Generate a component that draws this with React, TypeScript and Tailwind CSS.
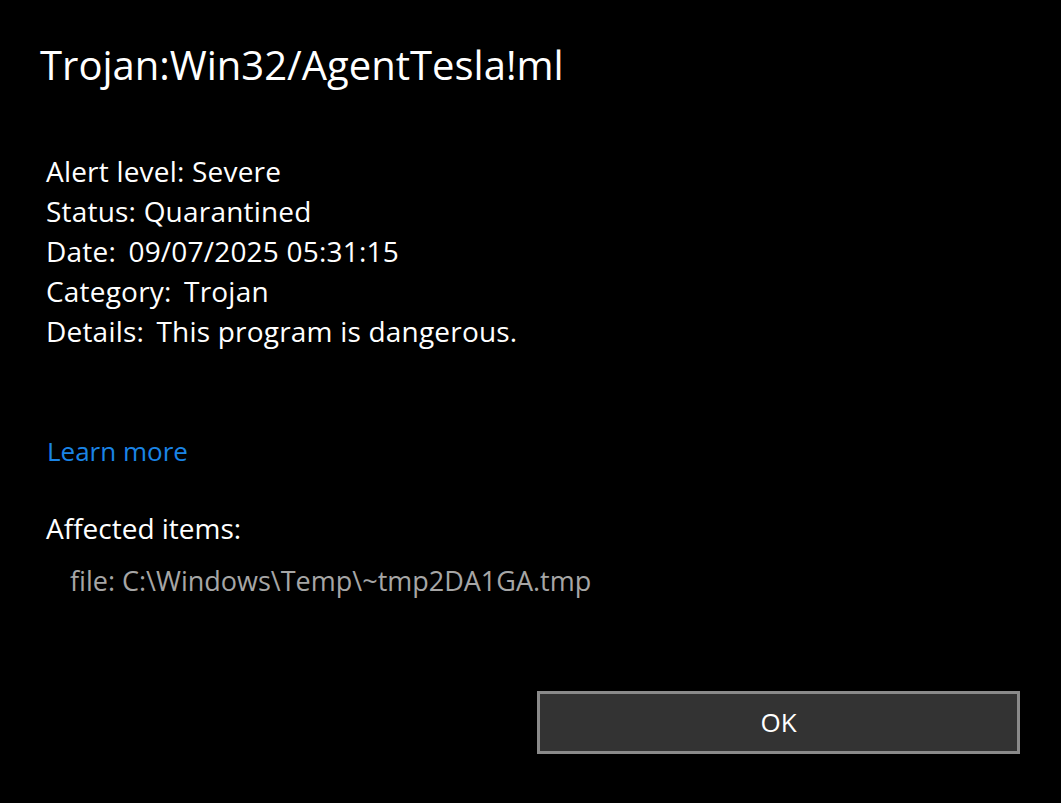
export default function App() {
  const rows: [string, string, boolean][] = [
    ['Alert level:', 'Severe', false],
    ['Status:', 'Quarantined', false],
    ['Date:', '09/07/2025 05:31:15', true],
    ['Category:', 'Trojan', true],
    ['Details:', 'This program is dangerous.', true],
  ];

  return (
    <div
      className="w-[1061px] h-[803px] bg-black text-white flex flex-col"
      style={{ fontFamily: '"Open Sans", "Noto Sans", sans-serif' }}
    >
      <h1 className="pl-[40px] pt-[38px] text-[40px] leading-[54px] font-normal">
        Trojan:Win32/AgentTesla!ml
      </h1>

      <div className="pl-[46px] pt-[59px] text-[28px] leading-[40px] tracking-[0.2px]">
        {rows.map(([label, value, wide]) => (
          <div key={label}>
            {label}{' '}
            <span className={wide ? 'ml-[5px]' : ''}>{value}</span>
          </div>
        ))}
      </div>

      <a className="ml-[47px] mt-[80px] text-[26px] leading-[40px] text-[#1a84e6] w-fit">
        Learn more
      </a>

      <div className="pl-[46px] mt-[37px] text-[28px] leading-[40px]">Affected items:</div>
      <div className="pl-[70px] mt-[13px] text-[27px] leading-[40px] text-[#a6a6a6]">
        file: C:\Windows\Temp\~tmp2DA1GA.tmp
      </div>

      <div className="flex justify-end pr-[41px] mt-[90px]">
        <button className="w-[483px] h-[63px] bg-[#333333] border-[3px] border-[#8a8a8a] text-[26px] text-white">
          OK
        </button>
      </div>
    </div>
  );
}
